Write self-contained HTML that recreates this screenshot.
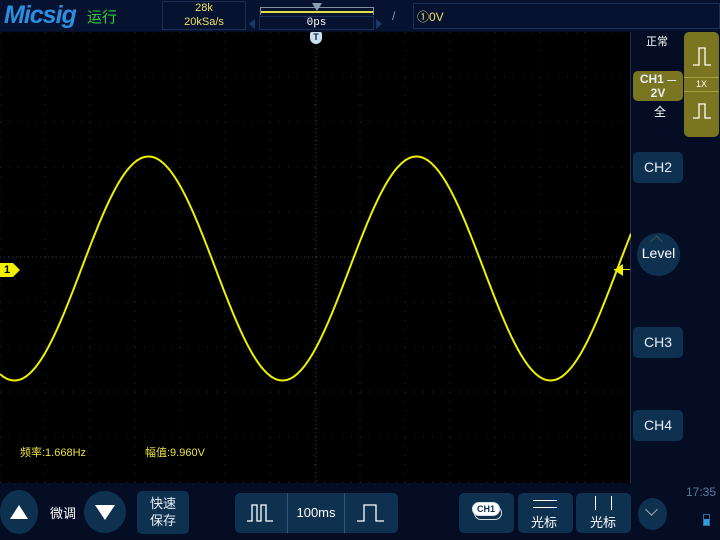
<!DOCTYPE html>
<html><head><meta charset="utf-8"><style>
*{margin:0;padding:0;box-sizing:border-box}
body{width:720px;height:540px;background:#050d24;position:relative;overflow:hidden;font-family:"Liberation Sans","Noto Sans CJK SC",sans-serif;color:#fff}
.a{position:absolute}
.btn{position:absolute;background:#0e3150;border-radius:5px;color:#e8eef5;text-align:center}
.ch{left:633px;width:50px;height:31px;line-height:31px;font-size:14px}
.circ{position:absolute;border-radius:50%;background:#0e3150}
</style></head><body>
<div class="a" style="left:0;top:0;width:720px;height:31px;background:#061230"></div>
<div class="a" style="left:4px;top:1px;font:italic bold 25px 'Liberation Sans',sans-serif;color:#2a8fe0;letter-spacing:-1px">Micsig</div>
<div class="a" style="left:87px;top:6px;font-size:15px;color:#2ecc40">运行</div>
<div class="a" style="left:162px;top:1px;width:84px;height:29px;border:1px solid #1a2f55"></div>
<div class="a" style="left:162px;top:2px;width:84px;text-align:center;font-size:11px;color:#f0e060">28k</div>
<div class="a" style="left:162px;top:16px;width:84px;text-align:center;font-size:11px;color:#f0e060">20kSa/s</div>
<div class="a" style="left:260px;top:11px;width:114px;height:2px;background:#e0e040"></div>
<div class="a" style="left:260px;top:7px;width:114px;height:8px;border:1px solid #8090a0;border-bottom:none"></div>
<div class="a" style="left:312px;top:3px;width:0;height:0;border-left:5px solid transparent;border-right:5px solid transparent;border-top:8px solid #8aa0b0"></div>
<div class="a" style="left:259px;top:16px;width:115px;height:14px;border:1px solid #1a2f55;text-align:center;font:11px 'Liberation Mono',monospace;color:#fff">0ps</div>
<div class="a" style="left:249px;top:19px;border-top:5px solid transparent;border-bottom:5px solid transparent;border-right:6px solid #1a3a66"></div>
<div class="a" style="left:376px;top:19px;border-top:5px solid transparent;border-bottom:5px solid transparent;border-left:6px solid #1a3a66"></div>
<div class="a" style="left:392px;top:9px;font-size:12px;color:#99a">/</div>
<div class="a" style="left:413px;top:3px;width:307px;height:26px;border:1px solid #1a2f55;font-size:12px;color:#f0e060;padding:4px 3px">①0V</div>

<div class="a" style="left:0;top:32px;width:631px;height:451px;background:#000;border-right:1px solid #1a2f55"></div>
<svg class="a" style="left:0;top:32px" width="631" height="451" id="sv"></svg>
<div class="a" style="left:310px;top:32px;width:12px;height:12px;background:#c8e0f0;border-radius:2px 2px 6px 6px;font:bold 9px 'Liberation Sans';color:#0a2040;text-align:center;line-height:11px">T</div>
<div class="a" style="left:0;top:263px;width:20px;height:14px;background:#f0f000;color:#000;font:bold 11px 'Liberation Sans';line-height:14px;padding-left:4px;clip-path:polygon(0 0,65% 0,100% 50%,65% 100%,0 100%)">1</div>
<div class="a" style="left:614px;top:264px;border-top:6px solid transparent;border-bottom:6px solid transparent;border-right:9px solid #f0f000"></div>
<div class="a" style="left:614px;top:269px;width:16px;height:1px;background:#f0f000"></div>
<div class="a" style="left:20px;top:444px;font-size:11px;color:#e8e040">频率:1.668Hz</div>
<div class="a" style="left:145px;top:444px;font-size:11px;color:#e8e040">幅值:9.960V</div>

<div class="a" style="left:646px;top:33px;font-size:11px">正常</div>
<div class="btn" style="left:684px;top:32px;width:35px;height:105px;background:#7a7520"></div>
<div class="a" style="left:684px;top:77px;width:35px;height:1px;background:#a8a040"></div>
<div class="a" style="left:684px;top:91px;width:35px;height:1px;background:#a8a040"></div>
<div class="a" style="left:684px;top:79px;width:35px;text-align:center;font-size:9px">1X</div>
<svg class="a" style="left:692px;top:45px" width="20" height="22"><path d="M1 20H7V3H13V20H19" stroke="#fff" stroke-width="1.3" fill="none"/></svg>
<svg class="a" style="left:692px;top:98px" width="20" height="22"><path d="M1 20H7V6H13V20H19" stroke="#fff" stroke-width="1.3" fill="none"/></svg>
<div class="btn" style="left:633px;top:71px;width:50px;height:30px;background:#7a7520;font:bold 12px 'Liberation Sans';line-height:13px;padding-top:2px">CH1 <span style="font-size:9px">—</span><br>2V</div>
<div class="a" style="left:654px;top:103px;font-size:12px">全</div>
<div class="btn ch" style="top:152px">CH2</div>
<div class="circ" style="left:637px;top:233px;width:43px;height:43px"></div>
<div class="a" style="left:637px;top:245px;width:43px;text-align:center;font-size:14px">Level</div>
<div class="a" style="left:652px;top:237px;width:9px;height:9px;border-left:1px solid #355;border-top:1px solid #355;transform:rotate(45deg)"></div>
<div class="btn ch" style="top:327px">CH3</div>
<div class="btn ch" style="top:410px">CH4</div>

<div class="circ" style="left:0;top:490px;width:38px;height:44px;border-radius:50%"></div>
<div class="a" style="left:10px;top:505px;border-left:9px solid transparent;border-right:9px solid transparent;border-bottom:14px solid #fff"></div>
<div class="a" style="left:50px;top:503px;font-size:13px">微调</div>
<div class="circ" style="left:84px;top:491px;width:42px;height:42px"></div>
<div class="a" style="left:95px;top:505px;border-left:10px solid transparent;border-right:10px solid transparent;border-top:15px solid #fff"></div>
<div class="btn" style="left:137px;top:491px;width:52px;height:43px;font-size:13px;line-height:17px;padding-top:4px">快速<br>保存</div>
<div class="btn" style="left:235px;top:493px;width:163px;height:40px"></div>
<div class="a" style="left:287px;top:493px;width:1px;height:40px;background:#2a5a80"></div>
<div class="a" style="left:344px;top:493px;width:1px;height:40px;background:#2a5a80"></div>
<svg class="a" style="left:246px;top:502px" width="30" height="22"><path d="M1 19H6V3H11V19H15V3H20V19H27" stroke="#fff" stroke-width="1.3" fill="none"/></svg>
<div class="a" style="left:288px;top:505px;width:56px;text-align:center;font-size:13px">100ms</div>
<svg class="a" style="left:356px;top:502px" width="30" height="22"><path d="M1 19H8V3H20V19H28" stroke="#fff" stroke-width="1.3" fill="none"/></svg>
<div class="btn" style="left:459px;top:493px;width:55px;height:40px"></div>
<div class="a" style="left:474px;top:506px;width:28px;height:14px;border:1px solid #ddd;border-radius:7px;background:#0e3150"></div>
<div class="a" style="left:472px;top:502px;width:28px;height:14px;border:1px solid #ddd;border-radius:7px;background:#fff;color:#0e3150;font:bold 9px 'Liberation Sans';text-align:center;line-height:12px">CH1</div>
<div class="btn" style="left:518px;top:493px;width:55px;height:40px"></div>
<div class="a" style="left:533px;top:500px;width:24px;height:1px;background:#fff"></div>
<div class="a" style="left:533px;top:507px;width:24px;height:1px;background:#fff"></div>
<div class="a" style="left:531px;top:512px;font-size:13px">光标</div>
<div class="btn" style="left:576px;top:493px;width:55px;height:40px"></div>
<div class="a" style="left:595px;top:496px;width:1px;height:14px;background:#fff"></div>
<div class="a" style="left:611px;top:496px;width:1px;height:14px;background:#fff"></div>
<div class="a" style="left:590px;top:512px;font-size:13px">光标</div>
<div class="circ" style="left:638px;top:498px;width:29px;height:32px"></div>
<div class="a" style="left:647px;top:505px;width:9px;height:9px;border-right:1px solid #9ab;border-bottom:1px solid #9ab;transform:rotate(45deg)"></div>
<div class="a" style="left:686px;top:485px;font-size:12px;color:#5a7a9a">17:35</div>
<div class="a" style="left:703px;top:514px;width:7px;height:12px;border:1px solid #3a6a9a"></div>
<div class="a" style="left:704px;top:519px;width:5px;height:6px;background:#2aa0e0"></div>
<script>
var s=document.getElementById('sv'),h='';
for(var i=0;i<=14;i++){var x=i*45;h+='<line x1="'+x+'" y1="0" x2="'+x+'" y2="451" stroke="#2a2a2a" stroke-width="1" stroke-dasharray="1,8"/>';}
for(var j=0;j<=10;j++){var y=j*45;h+='<line x1="0" y1="'+y+'" x2="631" y2="'+y+'" stroke="#2a2a2a" stroke-width="1" stroke-dasharray="1,8"/>';}
h+='<line x1="316" y1="0" x2="316" y2="451" stroke="#3a3a3a" stroke-dasharray="1,3"/>';
h+='<line x1="0" y1="225" x2="631" y2="225" stroke="#3a3a3a" stroke-dasharray="1,3"/>';
var p='';for(var x=0;x<=631;x+=1){var y=236.5-112*Math.sin(2*Math.PI*(x-81.5)/268);p+=x+','+y.toFixed(1)+' ';}
h+='<polyline points="'+p+'" fill="none" stroke="#f0f000" stroke-width="2"/>';
s.innerHTML=h;
</script>
</body></html>
